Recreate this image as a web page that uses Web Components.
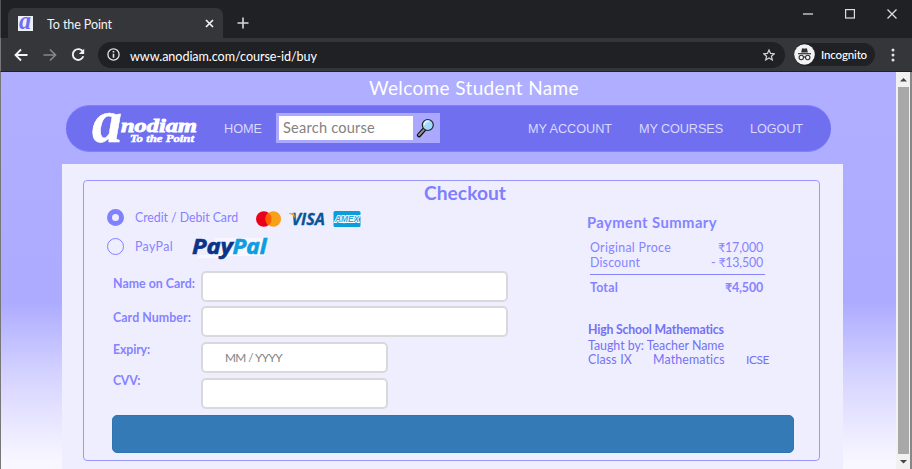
<!DOCTYPE html>
<html lang="en">
<head>
<meta charset="utf-8">
<title>To the Point</title>
<style>
html,body{margin:0;height:100%;overflow:hidden}
body{font-family:Lato,"Liberation Sans",sans-serif;background:#202124}
</style>
</head>
<body>
<browser-window></browser-window>
<script>
// Single-line text whose tracking is tuned so that it spans the width in "w".
class FitText extends HTMLElement{
  connectedCallback(){
    const g=(n,d)=>this.getAttribute(n)||d;
    const r=this.attachShadow({mode:'open'});
    r.innerHTML=`<style>:host{display:block;white-space:pre;flex:none;width:${g('w')}px;height:${g('h',16)}px;
      line-height:${g('h',16)}px;font-size:${g('size',12.4)}px;font-weight:${g('weight',400)}}
      span{display:inline-block}</style><span><slot></slot></span>`;
    const s=r.querySelector('span');
    s.style.letterSpacing=(+g('w')-s.getBoundingClientRect().width)/this.textContent.length+'px';
  }
}

class BrowserTabs extends HTMLElement{
  connectedCallback(){
    this.attachShadow({mode:'open'}).innerHTML=`<style>
    :host{display:flex;height:38px;background:#202124;box-sizing:border-box;padding:8px 14px 0 8px;color:#f1f3f4;border-left:1px solid #555;margin:0}
    .tab{width:215px;height:30px;box-sizing:border-box;background:#35363a;border-radius:7px 7px 0 0;display:flex;align-items:center;padding:0 9px 0 10px;margin-left:-1px}
    .fav{width:15px;height:15px;background:#eeeef4;margin-right:14px}
    svg{display:block;flex:none}.gap{flex:1}.plus{margin:9px 0 0 14px}.ctl{display:flex;gap:30px}
    .tab fit-text{margin-top:3px}
    </style>
    <div class="tab"><svg class="fav" viewBox="0 0 15 15"><text x="1" y="13" textLength="12" lengthAdjust="spacingAndGlyphs" fill="#6f6df0" font-family="'Liberation Serif',serif" font-size="25" font-weight="700" font-style="italic">a</text></svg><fit-text w="65" size="12.6">To the Point</fit-text><div class="gap"></div>
    <svg width="9" height="9" viewBox="0 0 9 9" stroke="#f1f3f4" stroke-width="1.7"><path d="M1 1l7 7M8 1l-7 7"/></svg></div>
    <svg class="plus" width="12" height="12" viewBox="0 0 12 12" stroke="#d5d7da" stroke-width="1.6"><path d="M6 .5v11M.5 6h11"/></svg>
    <div class="gap"></div>
    <div class="ctl">
    <svg width="12" height="12" viewBox="0 0 12 12" stroke="#ccc" stroke-width="1.4"><path d="M1 6h10"/></svg>
    <svg width="12" height="12" viewBox="0 0 12 12" fill="none" stroke="#dedede" stroke-width="1.2"><rect x="1.6" y="1.6" width="8.8" height="8.4"/></svg>
    <svg width="12" height="12" viewBox="0 0 12 12" stroke="#dedede" stroke-width="1.3"><path d="M1.500 1.500l9 9M10.500 1.500l-9 9"/></svg>
    </div>`;
  }
}

class BrowserToolbar extends HTMLElement{
  connectedCallback(){
    this.attachShadow({mode:'open'}).innerHTML=`<style>
    :host{display:flex;height:34px;background:#35363a;box-sizing:border-box;align-items:center;padding:0 17px 0 13px;border-bottom:1px solid #202124;border-left:1px solid #777;color:#fff}
    svg{display:block;flex:none}
    .back{margin-right:15px}.fwd{margin-right:13px}
    .url{flex:1;height:26px;border-radius:13px;background:#202124;margin:0 9px 0 12px;display:flex;align-items:center;padding:0 10px 0 9px;}
    .url .i{margin-right:10px}.gap{flex:1}.who{display:flex;height:23px;width:81px;border-radius:12px;background:#202124;align-items:center;gap:6px;margin-right:16px}
    .url fit-text{margin-top:4px}
    </style>
    <svg class="back" width="14" height="14" viewBox="0 0 14 14" fill="none" stroke="#f4f4f4" stroke-width="1.8"><path d="M13.500 7H2M7 1.500L1.500 7 7 12.500"/></svg>
    <svg class="fwd" width="14" height="14" viewBox="0 0 14 14" fill="none" stroke="#85868a" stroke-width="1.7"><path d="M.5 7H12M7 1.500L12.500 7 7 12.500"/></svg>
    <svg width="16" height="16" viewBox="0 0 16 16"><path d="M13 5A5.400 5.400 0 1 0 13.300 9.300" fill="none" stroke="#f1f1f1" stroke-width="1.9"/><path d="M14.200 1.800v5.300H8.800z" fill="#f1f1f1"/></svg>
    <div class="url"><svg class="i" width="13" height="13" viewBox="0 0 13 13" fill="none" stroke="#e5e5e5"><circle cx="6.500" cy="6.500" r="5.600" stroke-width="1.3"/><path d="M6.500 5.800v4M6.500 3v1.600" stroke-width="1.6"/></svg>
    <fit-text w="187" size="12.6">www.anodiam.com/course-id/buy</fit-text><div class="gap"></div>
    <svg width="12" height="12" viewBox="0 0 12 12"><path d="M6 .9l1.500 3.500 3.800.3-2.900 2.500.9 3.700L6 8.900l-3.300 2 .9-3.700L.7 4.700l3.800-.3z" fill="none" stroke="#d3d3d3" stroke-width="1.2"/></svg></div>
    <div class="who"><svg width="21" height="21" viewBox="0 0 21 21"><circle cx="10.500" cy="10.500" r="10.300" fill="#f3f3f3"/><path d="M7.100 8.500L8 4.800q.3-.8 1-.5l1.500.4 1.500-.4q.7-.3 1 .5l.9 3.700z" fill="#303135"/><path d="M4 9.700h13" stroke="#303135" stroke-width="1.2"/><g fill="none" stroke="#303135" stroke-width="1.1"><circle cx="7.300" cy="13.500" r="2.200"/><circle cx="13.700" cy="13.500" r="2.200"/><path d="M9.500 13.200q1-.6 2 0"/></g></svg><fit-text w="46" size="11.5" weight="500">Incognito</fit-text></div>
    <svg width="4" height="14" viewBox="0 0 4 14" fill="#e4e4e4"><circle cx="2" cy="2" r="1.500"/><circle cx="2" cy="7" r="1.500"/><circle cx="2" cy="12" r="1.500"/></svg>`;
  }
}

class SiteNav extends HTMLElement{
  connectedCallback(){
    this.attachShadow({mode:'open'}).innerHTML=`<style>
    :host{display:flex;width:765px;height:47px;box-sizing:border-box;border-radius:24px;background:#706ff0;border:1px solid #807fff;border-width:1px 0;align-items:center;margin:0 0 12px 65px;padding:0 28px 0 25px;color:#dad9ff;font-family:"Liberation Sans",Arial,sans-serif}
    svg{display:block;flex:none}.gap{flex:1}
    .search{display:flex;width:164px;height:30px;box-sizing:border-box;padding:3px;background:#aaa8ff;margin:-1px 0 0 14px;align-items:center}
    .in{height:24px;width:134px;background:#fff;color:#828282;box-sizing:border-box;padding-left:4px}
    .in fit-text{font-family:Lato,sans-serif}
    .links{display:flex;gap:27px}
    </style>
    <svg width="108" height="40" viewBox="0 -3 108 40" fill="#fff" stroke="#fff" style="margin-top:-3px;overflow:visible" font-weight="700" font-style="italic">
    <text x="1" y="31.500" font-size="62" font-family="'Liberation Serif',serif" textLength="30" lengthAdjust="spacingAndGlyphs" stroke-width=".6">a</text>
    <text x="30" y="21.500" font-size="19.500" font-family="'Liberation Serif',serif" textLength="76" lengthAdjust="spacingAndGlyphs" stroke-width=".9">nodiam</text>
    <text x="39" y="31.500" font-size="10" font-family="'Liberation Serif',serif" textLength="64" lengthAdjust="spacingAndGlyphs" stroke-width=".5">To the Point</text></svg>
    <fit-text w="38" size="12.7" style="margin-left:25px">HOME</fit-text>
    <div class="search"><div class="in"><fit-text w="92" h="24" size="14.6">Search course</fit-text></div>
    <svg width="24" height="24" viewBox="0 0 24 24"><path d="M6 19.200l5.200-5.600" stroke="#111" stroke-width="4.400" stroke-linecap="round"/><path d="M6 19l5-5.400" stroke="#8f8f9b" stroke-width="2" stroke-linecap="round"/><circle cx="14.800" cy="9" r="5.500" fill="#a2d9ff" stroke="#222" stroke-width="1.2"/><path d="M11.200 9a4 4 0 0 1 4.500-3.600" stroke="#e4f5ff" stroke-width="1.6" fill="none"/></svg></div>
    <div class="gap"></div><div class="links"><fit-text w="84" size="12.7">MY ACCOUNT</fit-text><fit-text w="84" size="12.7">MY COURSES</fit-text><fit-text w="53" size="12.7">LOGOUT</fit-text></div>`;
  }
}

class PayOption extends HTMLElement{
  connectedCallback(){
    this.attachShadow({mode:'open'}).innerHTML=`<style>
    :host{display:flex;align-items:center;height:29px;color:#8583ff}
    i{box-sizing:border-box;width:17px;height:17px;border-radius:50%;border:1px solid #8180ff;margin-right:11px}
    :host([checked]) i{border-width:5px}
    </style><i></i><slot></slot>`;
  }
}

class FormField extends HTMLElement{
  connectedCallback(){
    const g=n=>this.getAttribute(n)||'';
    this.attachShadow({mode:'open'}).innerHTML=`<style>
    :host{display:flex;height:${g('row')}px;color:#8583ff;align-items:flex-start}
    .l{width:88px}.l fit-text{margin-top:${g('drop')}px}
    .b{box-sizing:border-box;width:${g('width')}px;height:31px;border:2px solid #d9d9dc;border-radius:5px;background:#fff;color:#828282;padding:6px 0 0 22px}
    </style><div class="l"><fit-text w="${g('lw')}" size="12.4" weight="700">${g('label')}</fit-text></div><div class="b"><slot></slot></div>`;
  }
}

class PaymentSummary extends HTMLElement{
  connectedCallback(){
    this.attachShadow({mode:'open'}).innerHTML=`<style>
    :host{display:block;width:184px;color:#8583ff;padding-top:10px}
    .r{display:flex;justify-content:space-between;padding:0 4px 0 3px}
    .sum{margin-top:9px}.tot{border-top:1px solid #8583ff;margin:4px 6px 0 3px;padding:5px 2px 0 0}
    .sum .r{padding-right:8px}.course{color:#7472f3;margin-top:26px;padding-left:1px}.tags{display:flex;gap:21px}
    </style>
    <fit-text w="130" h="18" size="14.8" weight="700">Payment Summary</fit-text>
    <div class="sum"><div class="r"><fit-text w="81" h="15">Original Proce</fit-text><fit-text w="45" h="15">₹17,000</fit-text></div>
    <div class="r"><fit-text w="50" h="15">Discount</fit-text><fit-text w="52" h="15">- ₹13,500</fit-text></div></div>
    <div class="r tot"><fit-text w="28" h="15" weight="700">Total</fit-text><fit-text w="38" h="15" weight="700">₹4,500</fit-text></div>
    <div class="course"><fit-text w="136" h="18" weight="700" size="12.3">High School Mathematics</fit-text>
    <fit-text w="136" h="14">Taught by: Teacher Name</fit-text>
    <div class="tags"><fit-text w="44" h="14">Class IX</fit-text><fit-text w="72" h="14">Mathematics</fit-text><fit-text w="23" h="14" size="12">ICSE</fit-text></div></div>`;
  }
}

class CheckoutPanel extends HTMLElement{
  connectedCallback(){
    this.attachShadow({mode:'open'}).innerHTML=`<style>
    :host{display:block;box-sizing:border-box;width:781px;height:305px;margin-left:61px;background:#efeeff;padding:16px 0 0 21px}
    .box{box-sizing:border-box;width:737px;height:281px;border:1px solid #9b99ff;border-radius:4px}
    h1{margin:2px 0 0 340px;height:20px;font-size:inherit;color:#807eff}
    .cols{display:grid;grid-template-columns:503px 1fr;height:212px}
    .opts{padding-left:23px}.fields{padding:9.500px 0 0 29px}
    .pay{width:682px;height:38px;box-sizing:border-box;background:#337ab7;border:1px solid #2e75b1;border-radius:5px;margin-left:28px}
    svg{display:block;flex:none;overflow:visible}
    </style>
    <div class="box"><h1><fit-text w="82" h="20" size="19.2" weight="700">Checkout</fit-text></h1>
    <div class="cols"><div><div class="opts">
    <pay-option checked><fit-text w="103">Credit / Debit Card</fit-text>
      <svg width="106" height="18" viewBox="0 0 106 18" style="margin:2px 0 0 17px"><circle cx="8.800" cy="9" r="7.800" fill="#eb001b"/><circle cx="18.300" cy="9" r="7.800" fill="#f9a01b"/><path d="M13.500 2.800a7.800 7.800 0 0 1 0 12.400a7.800 7.800 0 0 1 0-12.400" fill="#ff5f00"/>
      <text x="36.500" y="14.700" font-family="'Open Sans',sans-serif" font-size="16.500" font-weight="700" font-style="italic" fill="#07549d" stroke="#07549d" stroke-width=".3" textLength="33.500" lengthAdjust="spacingAndGlyphs">VISA</text><path d="M34 3.100h4q1 .1 1.300 1.200l1 4.500Q38.500 5 34 3.800z" fill="#f9a51a"/>
      <rect x="78.500" y="1" width="27" height="16" rx="1.500" fill="#0c9ddb"/><text x="80" y="12" font-family="'Liberation Sans',sans-serif" font-size="8.500" font-weight="700" font-style="italic" fill="#2aa9e0" stroke="#fff" stroke-width="1.800" paint-order="stroke" textLength="24" lengthAdjust="spacingAndGlyphs">AMEX</text></svg></pay-option>
    <pay-option><fit-text w="38">PayPal</fit-text>
      <svg width="78" height="26" viewBox="-1 -2 78 26" style="margin:2px 0 0 17px" font-family="'Noto Sans','Open Sans',sans-serif" font-weight="700" font-style="italic"><path d="M24 1h50v18H35l-6 2H7v-3h15z" fill="#fff" opacity=".55"/><g stroke-width=".6"><text x="1" y="16.500" font-size="21.500" textLength="41" lengthAdjust="spacingAndGlyphs" fill="#09348a" stroke="#09348a">Pay</text><text x="41.500" y="16.500" font-size="21.500" textLength="34" lengthAdjust="spacingAndGlyphs" fill="#0c9ee0" stroke="#0c9ee0">Pal</text></g></svg></pay-option>
    </div><div class="fields">
    <form-field row="35" drop="5" lw="82" label="Name on Card:" width="307"></form-field>
    <form-field row="36" drop="4" lw="78" label="Card Number:" width="307"></form-field>
    <form-field row="36" drop="0" lw="37" label="Expiry:" width="187"><fit-text w="57" size="11.8">MM / YYYY</fit-text></form-field>
    <form-field row="31" drop="-5" lw="27" label="CVV:" width="187"></form-field></div></div>
    <payment-summary></payment-summary></div><div class="pay"></div></div>`;
  }
}

class PageScrollbar extends HTMLElement{
  connectedCallback(){
    this.attachShadow({mode:'open'}).innerHTML=`<style>
    :host{display:flex;flex-direction:column;align-items:center;box-sizing:border-box;width:16px;background:#f1f1f1;border-right:2px solid #8a8688}
    svg{display:block;height:15px;width:13px}.t{flex:1;width:11px;background:#a8a8a8}
    </style><svg viewBox="0 0 13 15"><path d="M3 9.500l3.500-3.500L10 9.500z" fill="#444"/></svg><div class="t"></div><svg viewBox="0 0 13 15"><path d="M3 6l3.500 3.500L10 6z" fill="#444"/></svg>`;
  }
}

class BrowserWindow extends HTMLElement{
  connectedCallback(){
    this.attachShadow({mode:'open'}).innerHTML=`<style>
    :host{display:flex;flex-direction:column;width:912px;height:469px;overflow:hidden}
    .view{flex:1;display:flex;min-height:0}
    main{flex:1;border-left:1px solid #777;background:linear-gradient(#b0aeff 0,#adabff 230px,#d6d4ff 305px,#f8f7ff 390px);overflow:hidden;color:#fff}
    .hi{margin:5px 0 0 368px;height:28px}
    </style><browser-tabs></browser-tabs><browser-toolbar></browser-toolbar>
    <div class="view"><main><div class="hi"><fit-text w="210" h="22" size="19">Welcome Student Name</fit-text></div><site-nav></site-nav><checkout-panel></checkout-panel></main><page-scrollbar></page-scrollbar></div>`;
  }
}
customElements.define('fit-text',FitText);
customElements.define('browser-tabs',BrowserTabs);
customElements.define('browser-toolbar',BrowserToolbar);
customElements.define('site-nav',SiteNav);
customElements.define('pay-option',PayOption);
customElements.define('form-field',FormField);
customElements.define('payment-summary',PaymentSummary);
customElements.define('checkout-panel',CheckoutPanel);
customElements.define('page-scrollbar',PageScrollbar);
customElements.define('browser-window',BrowserWindow);
</script>
</body>
</html>
